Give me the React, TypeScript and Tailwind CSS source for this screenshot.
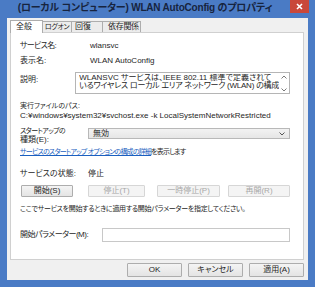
import React from "react";

function Btn({ children, w, disabled, className = "" }: { children: React.ReactNode; w: string; disabled?: boolean; className?: string }) {
  return (
    <div
      className={
        "h-full flex items-center justify-center border rounded-[1px] whitespace-nowrap " +
        w +
        " " +
        (disabled
          ? "border-[#d6d6d6] bg-[#f4f4f4] text-[#a8a8a8]"
          : "border-[#adadad] bg-gradient-to-b from-[#f4f4f4] to-[#e4e4e4] text-[#1e1e1e]") +
        " " +
        className
      }
    >
      {children}
    </div>
  );
}

export default function App() {
  return (
    <div className="w-[315px] h-[287px] bg-[#4a7bc5] flex flex-col overflow-hidden [font-family:'Liberation_Sans','Noto_Sans_CJK_JP',sans-serif] [font-feature-settings:'palt'] text-[8px] leading-[10px] text-[#262626]">
      {/* title bar */}
      <div className="h-[18px] flex items-start shrink-0">
        <div className="flex-1 h-[15px] flex items-center justify-center text-[10px] font-bold text-[#17243e] whitespace-nowrap tracking-[-0.2px]">
          (ローカル コンピューター) WLAN AutoConfig のプロパティ
        </div>
        <div className="w-[19px] h-[13px] mr-[6px] bg-[#c9483a] flex items-center justify-center">
          <svg width="7" height="7" viewBox="0 0 7 7">
            <path d="M1 1L6 6M6 1L1 6" stroke="white" strokeWidth="1.6" />
          </svg>
        </div>
      </div>

      {/* client */}
      <div className="mx-[7px] h-[262px] bg-[#f0f0f0] flex flex-col shrink-0">
        {/* tabs */}
        <div className="h-[14px] flex items-end pl-[3px] shrink-0 whitespace-nowrap">
          <div className="relative z-10 w-[33px] h-[13px] -mb-[1px] bg-white border border-[#adadad] border-b-0 flex items-center pl-[5px]">
            全般
          </div>
          <div className="w-[29px] h-[11px] bg-[#ececec] border border-[#adadad] border-l-0 border-b-0 flex items-center justify-center text-[7px] tracking-[-0.4px]">
            ログオン
          </div>
          <div className="w-[31px] h-[11px] bg-[#ececec] border border-[#adadad] border-l-0 border-b-0 flex items-center pl-[3px]">
            回復
          </div>
          <div className="w-[38px] h-[11px] bg-[#ececec] border border-[#adadad] border-l-0 border-b-0 flex items-center pl-[5px] tracking-[-0.3px]">
            依存関係
          </div>
        </div>

        {/* panel */}
        <div className="ml-[3px] mr-[4px] h-[228px] bg-white border border-[#d0d0d0] flex flex-col pl-[9px] pr-[13px] pt-[8px] shrink-0 whitespace-nowrap">
          <div className="flex h-[10px]">
            <div className="w-[70px] tracking-[-0.7px]">サービス名:</div>
            <div>wlansvc</div>
          </div>
          <div className="flex h-[10px] mt-[5px]">
            <div className="w-[70px]">表示名:</div>
            <div>WLAN AutoConfig</div>
          </div>
          <div className="flex mt-[6px] h-[22px]">
            <div className="w-[68px] mt-[3px]">説明:</div>
            <div className="flex-1 border border-[#b5b5b5] flex pl-[3px] pt-[1px] leading-[8px]">
              <div className="flex-1 overflow-hidden">
                <div>WLANSVC サービスは、IEEE 802.11 標準で定義されて</div>
                <div className="tracking-[-0.25px]">いるワイヤレス ローカル エリア ネットワーク (WLAN) の構成</div>
              </div>
              <div className="w-[10px] flex flex-col items-center justify-between py-[1px]">
                <svg width="6" height="4" viewBox="0 0 6 4">
                  <path d="M0.5 3.5L3 1L5.5 3.5" stroke="#7a7a7a" fill="none" strokeWidth="1" />
                </svg>
                <svg width="6" height="4" viewBox="0 0 6 4">
                  <path d="M0.5 0.5L3 3L5.5 0.5" stroke="#7a7a7a" fill="none" strokeWidth="1" />
                </svg>
              </div>
            </div>
          </div>
          <div className="h-[10px] mt-[7px] text-[7px]">実行ファイルのパス:</div>
          <div className="h-[10px]">C:¥windows¥system32¥svchost.exe -k LocalSystemNetworkRestricted</div>
          <div className="flex mt-[5px] h-[18px]">
            <div className="w-[68px] leading-[9px]">
              <div className="text-[7px] tracking-[-0.6px]">スタートアップの</div>
              <div>種類(E):</div>
            </div>
            <div className="flex-1 h-[11px] mt-[2px] border border-[#b8b8b8] bg-gradient-to-b from-[#f2f2f2] to-[#e6e6e6] flex items-center pl-[4px] pr-[4px]">
              <div className="flex-1">無効</div>
              <svg width="6" height="4" viewBox="0 0 6 4">
                <path d="M0.5 0.5L3 3L5.5 0.5" stroke="#555" fill="none" strokeWidth="1" />
              </svg>
            </div>
          </div>
          <div className="h-[10px] mt-[3px] text-[7px] tracking-[-0.8px]">
            <span className="text-[#1a5fc0] underline">サービスのスタートアップ オプションの構成の詳細</span>
            <span>を表示します</span>
          </div>
          <div className="flex h-[10px] mt-[12px]">
            <div className="w-[68px]">サービスの状態:</div>
            <div>停止</div>
          </div>
          <div className="flex h-[12px] mt-[6px] pl-[1px]">
            <Btn w="w-[52px]">開始(S)</Btn>
            <Btn w="w-[57px]" disabled className="ml-[15px]">停止(T)</Btn>
            <Btn w="w-[63px]" disabled className="ml-[12px]">一時停止(P)</Btn>
            <Btn w="w-[62px]" disabled className="ml-[8px]">再開(R)</Btn>
          </div>
          <div className="h-[10px] mt-[7px] text-[7px] tracking-[-0.3px]">
            ここでサービスを開始するときに適用する開始パラメーターを指定してください。
          </div>
          <div className="flex h-[14px] mt-[14px] items-center">
            <div className="w-[82px] tracking-[-0.5px]">開始パラメーター(M):</div>
            <div className="flex-1 h-full border border-[#c8c8c8] bg-white"></div>
          </div>
        </div>

        {/* bottom buttons */}
        <div className="flex justify-end gap-[6px] mr-[4px] mt-[3px] h-[14px]">
          <Btn w="w-[55px]">OK</Btn>
          <Btn w="w-[55px]">キャンセル</Btn>
          <Btn w="w-[55px]">適用(A)</Btn>
        </div>
      </div>
    </div>
  );
}
